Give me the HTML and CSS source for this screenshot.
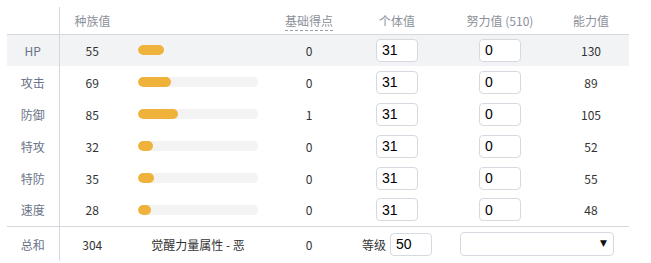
FILE: index.html
```html
<!DOCTYPE html>
<html lang="zh-CN">
<head>
    <meta charset="UTF-8">
    <meta name="viewport" content="width=device-width, initial-scale=1.0">
    <link rel="stylesheet" href="styles.css">
    <title>能力值计算</title>
</head>
<body>
    <table class="stats">
        <colgroup>
            <col class="c-label">
            <col class="c-base">
            <col class="c-bar">
            <col class="c-pts">
            <col class="c-iv">
            <col class="c-ev">
            <col class="c-val">
        </colgroup>
        <thead>
            <tr>
                <th class="label"></th>
                <th class="left">种族值</th>
                <th></th>
                <th><span class="dashed">基础得点</span></th>
                <th>个体值</th>
                <th>努力值 (510)</th>
                <th>能力值</th>
            </tr>
        </thead>
        <tbody>
            <tr class="hl">
                <td class="label">HP</td>
                <td>55</td>
                <td class="bar-cell"><div class="bar"><div class="fill" style="width: 21.6%"></div></div></td>
                <td>0</td>
                <td><input class="box" value="31"></td>
                <td><input class="box" value="0"></td>
                <td>130</td>
            </tr>
            <tr>
                <td class="label">攻击</td>
                <td>69</td>
                <td class="bar-cell"><div class="bar"><div class="fill" style="width: 27.1%"></div></div></td>
                <td>0</td>
                <td><input class="box" value="31"></td>
                <td><input class="box" value="0"></td>
                <td>89</td>
            </tr>
            <tr>
                <td class="label">防御</td>
                <td>85</td>
                <td class="bar-cell"><div class="bar"><div class="fill" style="width: 33.3%"></div></div></td>
                <td>1</td>
                <td><input class="box" value="31"></td>
                <td><input class="box" value="0"></td>
                <td>105</td>
            </tr>
            <tr>
                <td class="label">特攻</td>
                <td>32</td>
                <td class="bar-cell"><div class="bar"><div class="fill" style="width: 12.5%"></div></div></td>
                <td>0</td>
                <td><input class="box" value="31"></td>
                <td><input class="box" value="0"></td>
                <td>52</td>
            </tr>
            <tr>
                <td class="label">特防</td>
                <td>35</td>
                <td class="bar-cell"><div class="bar"><div class="fill" style="width: 13.7%"></div></div></td>
                <td>0</td>
                <td><input class="box" value="31"></td>
                <td><input class="box" value="0"></td>
                <td>55</td>
            </tr>
            <tr>
                <td class="label">速度</td>
                <td>28</td>
                <td class="bar-cell"><div class="bar"><div class="fill" style="width: 11%"></div></div></td>
                <td>0</td>
                <td><input class="box" value="31"></td>
                <td><input class="box" value="0"></td>
                <td>48</td>
            </tr>
        </tbody>
        <tfoot>
            <tr>
                <td class="label">总和</td>
                <td>304</td>
                <td>觉醒力量属性 - 恶</td>
                <td>0</td>
                <td><span class="lv">等级</span><input class="box" value="50"></td>
                <td colspan="2"><span class="select"><select></select></span></td>
            </tr>
        </tfoot>
    </table>
</body>
</html>
```

FILE: styles.css
```css
* { box-sizing: border-box; }
body {
    margin: 0;
    background: #fff;
    font-family: "Noto Sans CJK SC", "Noto Sans", sans-serif;
    font-size: 12px;
    color: #333;
}
.stats {
    margin: 7px 0 0 7px;
    width: 622px;
    table-layout: fixed;
    border-collapse: collapse;
}
.c-label { width: 52px; }
.c-base { width: 66px; }
.c-bar { width: 146px; }
.c-pts { width: 76px; }
.c-iv { width: 100px; }
.c-ev { width: 106px; }
.c-val { width: 76px; }

th, td {
    padding: 0;
    text-align: center;
    font-weight: normal;
    white-space: nowrap;
}
th {
    height: 27px;
    color: #8c9099;
    border-bottom: 1px solid #d3d7de;
    vertical-align: middle;
}
th.left { text-align: left; padding-left: 15px; }
.dashed { border-bottom: 1px dashed #9a9ea6; padding-bottom: 1px; }
td { height: 32px; }
tbody tr.hl td { background: #f2f3f5; }
.label {
    color: #6a7388;
    border-right: 1px solid #d3d7de;
}
tbody tr:last-child td { border-bottom: 1px solid #d3d7de; }
tfoot td { height: 35px; padding-top: 1px; }

/* bars */
.bar-cell { padding-left: 13px; text-align: left; }
.bar {
    width: 120px;
    height: 10px;
    border-radius: 5px;
    background: #f3f3f3;
    overflow: hidden;
}
.hl .bar { background: #f2f3f5; }
.fill {
    height: 100%;
    border-radius: 5px;
    background: #efb33b;
}

/* inputs */
.box {
    width: 42px;
    height: 23px;
    padding: 0 0 0 5px;
    border: 1px solid #d6d9df;
    border-radius: 4px;
    background: #fff;
    font-family: "Liberation Sans", Arial, sans-serif;
    font-size: 14px;
    color: #000;
    vertical-align: middle;
}
.lv { vertical-align: middle; margin-right: 4px; }
.select {
    position: relative;
    display: inline-block;
    vertical-align: middle;
    margin-left: -2px;
}
.select select {
    width: 154px;
    height: 24px;
    border: 1px solid #d6d9df;
    border-radius: 4px;
    background: #fff;
    appearance: none;
    display: block;
}
.select::after {
    content: "▼";
    position: absolute;
    right: 7px;
    top: 6px;
    font-family: "DejaVu Sans", sans-serif;
    font-size: 9px;
    color: #111;
}
```
